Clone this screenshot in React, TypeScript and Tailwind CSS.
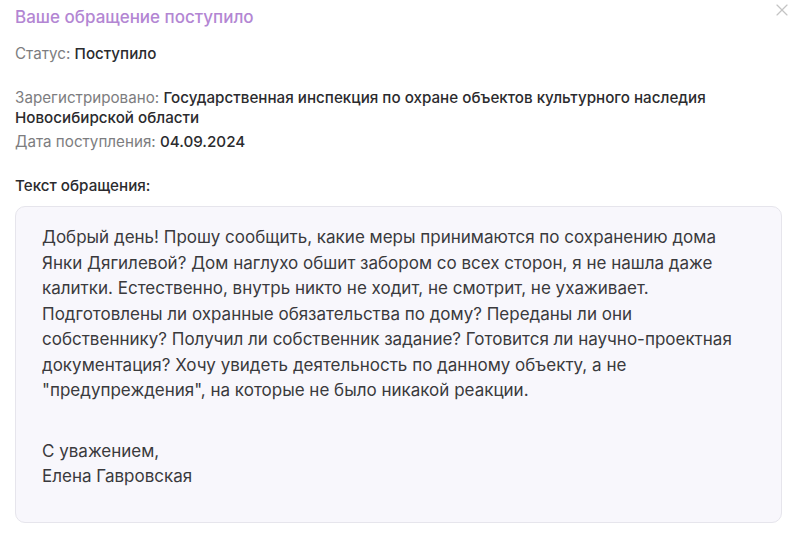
import { X } from "lucide-react";

const body = [
  "Добрый день! Прошу сообщить, какие меры принимаются по сохранению дома",
  "Янки Дягилевой? Дом наглухо обшит забором со всех сторон, я не нашла даже",
  "калитки. Естественно, внутрь никто не ходит, не смотрит, не ухаживает.",
  "Подготовлены ли охранные обязательства по дому? Переданы ли они",
  "собственнику? Получил ли собственник задание? Готовится ли научно-проектная",
  "документация? Хочу увидеть деятельность по данному объекту, а не",
  "\"предупреждения\", на которые не было никакой реакции.",
];

export default function App() {
  return (
    <div className="relative w-[800px] h-[536px] bg-white font-['Inter','Noto_Sans',sans-serif] px-[15px] pt-[6px]">
      <button className="absolute right-[8px] top-0 text-[#c4c4c4]">
        <X className="w-[20px] h-[20px]" strokeWidth={1.4} />
      </button>

      <h2 className="text-[17px] leading-[22px] font-medium text-[#b386d3]">Ваше обращение поступило</h2>

      <p className="mt-[16px] text-[15.2px] leading-[20px] text-[#7d7d80]">
        Статус: <span className="font-medium text-[#2b2b2e]">Поступило</span>
      </p>

      <div className="mt-[24px] text-[15.2px] leading-[20px] text-[#7d7d80] flex flex-col gap-[4px]">
        <p>
          Зарегистрировано:{" "}
          <span className="font-medium text-[#2b2b2e]">
            Государственная инспекция по охране объектов культурного наследия
          </span>
          <br />
          <span className="font-medium text-[#2b2b2e]">Новосибирской области</span>
        </p>
        <p>
          Дата поступления: <span className="font-medium text-[#2b2b2e]">04.09.2024</span>
        </p>
      </div>

      <p className="mt-[24px] text-[15.2px] leading-[20px] font-medium text-[#2b2b2e]">Текст обращения:</p>

      <div className="mt-[10px] w-[767px] rounded-[10px] border border-[#e6e5ec] bg-[#f8f7fc] pl-[26px] pt-[18px] pb-[32px] text-[17px] leading-[25.5px] text-[#3a3a3d]">
        {body.map((line) => (
          <div key={line} className="whitespace-nowrap">{line}</div>
        ))}
        <div className="mt-[35px]">С уважением,</div>
        <div>Елена Гавровская</div>
      </div>
    </div>
  );
}
